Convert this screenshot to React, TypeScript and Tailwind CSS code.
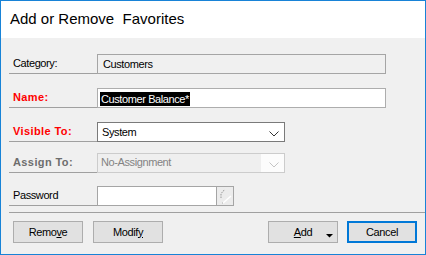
import React from "react";

function Chevron({ disabled }: { disabled?: boolean }) {
  return (
    <svg width="10" height="6" viewBox="0 0 10 6" className="absolute right-[5px] top-[8px]">
      <polyline
        points="0.5,0.5 5,5 9.5,0.5"
        fill="none"
        stroke={disabled ? "#c4c4c4" : "#333333"}
        strokeWidth="1"
      />
    </svg>
  );
}

function Label({ text, className = "" }: { text: string; className?: string }) {
  return (
    <div className={`w-[88px] h-[20px] shrink-0 border-b border-[#a0a0a0] pl-[4px] pt-[4px] leading-[11px] ${className}`}>
      {text}
    </div>
  );
}

function Btn({ children, primary }: { children: React.ReactNode; primary?: boolean }) {
  return (
    <div
      className={`relative w-[70px] h-[22px] flex items-center justify-center bg-[#e1e1e1] leading-[11px] ${
        primary ? "border-2 border-[#0078d7]" : "border border-[#adadad]"
      }`}
    >
      {children}
    </div>
  );
}

export default function App() {
  return (
    <div className="w-[426px] h-[255px] border border-[#1883d7] flex flex-col bg-[#f0f0f0] text-[11px] tracking-[-0.4px] text-black font-['Liberation_Sans',Arial,sans-serif]">
      <div className="h-[37px] shrink-0 bg-white px-[9px] pt-[9px] text-[15px] leading-[18px] tracking-normal whitespace-pre">
        Add or Remove  Favorites
      </div>

      <div className="flex flex-col pt-[16px] pl-[8px]">
        <div className="flex items-end">
          <Label text="Category:" />
          <div className="w-[289px] h-[20px] border border-[#a5a5a5] pl-[5px] pt-[4px] leading-[11px]">Customers</div>
        </div>

        <div className="flex items-end mt-[14px]">
          <Label text="Name:" className="text-[#ff0000] font-bold tracking-[0.4px]" />
          <div className="w-[289px] h-[20px] border border-[#adadad] bg-white pl-[2px] pt-[2px]">
            <span className="inline-block bg-black text-white px-[1px] h-[14px] pt-[2px] leading-[11px]">Customer Balance*</span>
          </div>
        </div>

        <div className="flex items-end mt-[14px]">
          <Label text="Visible To:" className="text-[#ff0000] font-bold tracking-[0.4px]" />
          <div className="relative w-[188px] h-[20px] border border-[#7a7a7a] bg-white pl-[4px] pt-[4px] leading-[11px]">
            System
            <Chevron />
          </div>
        </div>

        <div className="flex items-end mt-[11px]">
          <Label text="Assign To:" className="text-[#6d6d6d] font-bold tracking-[0.4px]" />
          <div className="relative w-[188px] h-[20px] border border-[#cccccc] bg-[#fcfcfc] flex">
            <div className="w-[163px] h-full bg-[#efefef] pl-[3px] pt-[3px] leading-[11px] text-[#838383]">No-Assignment</div>
            <Chevron disabled />
          </div>
        </div>

        <div className="flex items-end mt-[13px]">
          <Label text="Password" />
          <div className="w-[137px] h-[20px] border border-[#a5a5a5] flex">
            <div className="flex-1 bg-white" />
            <div className="w-[17px] h-full border-l border-[#a5a5a5] bg-[#ececec] flex items-center justify-center">
              <svg width="15" height="17" viewBox="0 0 15 17">
                <path d="M3 10 L3 6 L5 3 L7 2" fill="none" stroke="#9a9a9a" strokeWidth="1" strokeDasharray="1.5 1" />
                <path d="M5 15 L13 8" fill="none" stroke="#ffffff" strokeWidth="1.5" />
                <path d="M4 15 L5 15" fill="none" stroke="#b0b0b0" strokeWidth="1" />
              </svg>
            </div>
          </div>
        </div>

        <div className="mt-[6px] border-t border-[#a0a0a0]" />
      </div>

      <div className="flex items-center mt-[8px] pl-[12px] pr-[8px]">
        <Btn>
          <span>
            Remo<span className="underline">v</span>e
          </span>
        </Btn>
        <div className="ml-[10px]">
          <Btn>
            <span>
              Modif<span className="underline">y</span>
            </span>
          </Btn>
        </div>
        <div className="ml-auto">
          <Btn>
            <span>
              <span className="underline">A</span>dd
            </span>
            <svg width="7" height="4" viewBox="0 0 7 4" className="absolute right-[4px] bottom-[4px]">
              <polygon points="0,0 7,0 3.5,3.5" fill="#000000" />
            </svg>
          </Btn>
        </div>
        <div className="ml-[9px]">
          <Btn primary>Cancel</Btn>
        </div>
      </div>
    </div>
  );
}
